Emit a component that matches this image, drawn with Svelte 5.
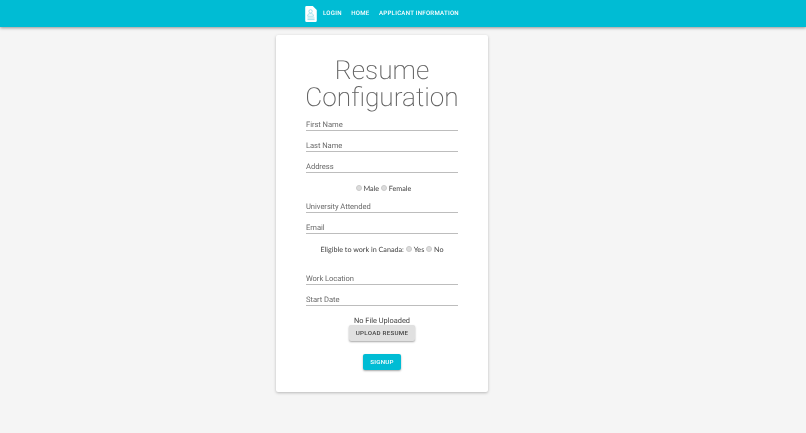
<script>
  const nav = ['Login', 'Home', 'Applicant Information'];
</script>

<div class="page">
  <header class="bar">
    <svg class="logo" width="12" height="16" viewBox="0 0 13 18" aria-hidden="true">
      <path d="M1.5 0H8.5L13 4.5V16.5A1.5 1.5 0 0 1 11.5 18H1.5A1.5 1.5 0 0 1 0 16.5V1.5A1.5 1.5 0 0 1 1.5 0Z" fill="#fff"/>
      <circle cx="6" cy="6" r="1.9" fill="none" stroke="#7fd6e6" stroke-width="0.8"/>
      <path d="M2.8 11.5V10.500C2.8 9 4.5 8.7 6 8.7S9.200 9 9.200 10.500V11.5Z" fill="none" stroke="#7fd6e6" stroke-width="0.8"/>
      <path d="M2.5 13.500H10.500M2.5 15.300H10.500" stroke="#7fd6e6" stroke-width="0.8"/>
    </svg>
    <nav class="links">
      {#each nav as item}
        <span class="link">{item}</span>
      {/each}
    </nav>
  </header>

  <main class="card">
    <h1>Resume Configuration</h1>

    <div class="field"><span>First Name</span></div>
    <div class="field"><span>Last Name</span></div>
    <div class="field"><span>Address</span></div>

    <div class="choice gender">
      <i class="radio"></i><span>Male</span><i class="radio"></i><span>Female</span>
    </div>

    <div class="field"><span>University Attended</span></div>
    <div class="field"><span>Email</span></div>

    <div class="choice">
      <span>Eligible to work in Canada:</span><i class="radio"></i><span>Yes</span><i class="radio"></i><span>No</span>
    </div>

    <div class="field work"><span>Work Location</span></div>
    <div class="field"><span>Start Date</span></div>

    <p class="file">No File Uploaded</p>
    <button class="btn upload" type="button">Upload Resume</button>
    <button class="btn signup" type="button">Signup</button>
  </main>
</div>

<style>
  :global(body) {
    margin: 0;
    background: #f5f5f5;
    font-family: Roboto, "Liberation Sans", sans-serif;
    text-rendering: geometricPrecision;
  }
  .page {
    height: 433px;
    overflow: hidden;
    background: #f5f5f5;
    display: flex;
    flex-direction: column;
    align-items: center;
    filter: blur(0.3px);
  }
  .bar {
    align-self: stretch;
    height: 27px;
    background: #00bcd4;
    box-shadow: 0 1px 3px rgba(0, 0, 0, 0.4);
    display: flex;
    align-items: center;
    padding-left: 305px;
    flex: none;
  }
  .logo { flex: none; margin-right: 6px; }
  .links { display: flex; gap: 9.5px; }
  .link {
    color: #fff;
    font-size: 6.1px;
    font-weight: 500;
    letter-spacing: 0.25px;
    text-transform: uppercase;
  }
  .card {
    box-sizing: border-box;
    width: 212px;
    height: 357px;
    margin: 8px 42px 0 0;
    background: #fff;
    border-radius: 2px;
    box-shadow: 0 1px 3px rgba(0, 0, 0, 0.25);
    display: flex;
    flex-direction: column;
    align-items: center;
    padding-top: 23px;
    flex: none;
  }
  h1 {
    margin: 0 0 -2px;
    width: 160px;
    font-size: 26.2px;
    line-height: 27px;
    font-weight: 200;
    color: #616161;
    text-align: center;
  }
  .field {
    box-sizing: border-box;
    width: 152px;
    height: 21px;
    border-bottom: 1px solid #bdbdbd;
    color: #6a6a6a;
    font-size: 7.6px;
    letter-spacing: -0.05px;
    display: flex;
    align-items: flex-end;
    padding-bottom: 1.5px;
    flex: none;
  }
  .field.work { margin-top: 11px; }
  .choice {
    display: flex;
    align-items: center;
    justify-content: center;
    height: 8px;
    margin-top: 11px;
    color: #424242;
    font-size: 7.2px;
    font-family: Lato, sans-serif;
    flex: none;
  }
  .gender { padding-left: 1px; }
  .radio {
    box-sizing: border-box;
    width: 6px;
    height: 6px;
    border-radius: 50%;
    background: #dcdcdc;
    border: 0.5px solid #cacaca;
    margin: 0 1.75px 0 2px;
  }
  .file {
    margin: 10px 0 -1px;
    font-size: 7.4px;
    line-height: 10px;
    color: #424242;
  }
  .btn {
    border: 0;
    border-radius: 2px;
    font-family: inherit;
    font-size: 6.2px;
    font-weight: 500;
    letter-spacing: 0.25px;
    text-transform: uppercase;
    padding: 0;
    height: 16px;
    box-shadow: 0 1px 2px rgba(0, 0, 0, 0.35);
    flex: none;
  }
  .upload {
    width: 66px;
    background: #e0e0e0;
    color: #424242;
  }
  .signup {
    width: 38px;
    margin-top: 13px;
    background: #00bcd4;
    color: #fff;
  }
</style>
